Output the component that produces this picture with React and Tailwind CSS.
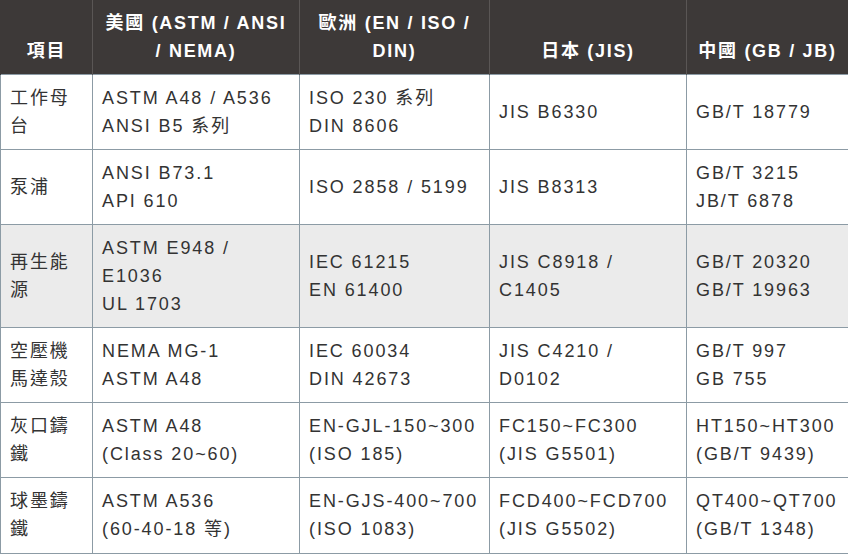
const HEAD = [
  ['項目'],
  ['美國 (ASTM / ANSI', '/ NEMA)'],
  ['歐洲 (EN / ISO /', 'DIN)'],
  ['日本 (JIS)'],
  ['中國 (GB / JB)'],
];

const ROWS = [
  { h: 'h-[75px]', cells: [['工作母', '台'], ['ASTM A48 / A536', 'ANSI B5 系列'], ['ISO 230 系列', 'DIN 8606'], ['JIS B6330'], ['GB/T 18779']] },
  { h: 'h-[75px]', cells: [['泵浦'], ['ANSI B73.1', 'API 610'], ['ISO 2858 / 5199'], ['JIS B8313'], ['GB/T 3215', 'JB/T 6878']] },
  { h: 'h-[103px]', shade: true, cells: [['再生能', '源'], ['ASTM E948 /', 'E1036', 'UL 1703'], ['IEC 61215', 'EN 61400'], ['JIS C8918 /', 'C1405'], ['GB/T 20320', 'GB/T 19963']] },
  { h: 'h-[75px]', cells: [['空壓機', '馬達殼'], ['NEMA MG-1', 'ASTM A48'], ['IEC 60034', 'DIN 42673'], ['JIS C4210 /', 'D0102'], ['GB/T 997', 'GB 755']] },
  { h: 'h-[75px]', cells: [['灰口鑄', '鐵'], ['ASTM A48', '(Class 20~60)'], ['EN-GJL-150~300', '(ISO 185)'], ['FC150~FC300', '(JIS G5501)'], ['HT150~HT300', '(GB/T 9439)']] },
  { h: 'h-[76px]', cells: [['球墨鑄', '鐵'], ['ASTM A536', '(60-40-18 等)'], ['EN-GJS-400~700', '(ISO 1083)'], ['FCD400~FCD700', '(JIS G5502)'], ['QT400~QT700', '(GB/T 1348)']] },
];

const WIDTHS = ['w-[92px]', 'w-[207px]', 'w-[190px]', 'w-[197px]', 'w-[162px]'];

function Lines({ lines }) {
  return lines.map((l, i) => (
    <span key={i} className="block whitespace-nowrap">{l}</span>
  ));
}

export default function App() {
  return (
    <div className="h-[554px] w-[848px] overflow-hidden bg-white font-['Liberation_Sans','Noto_Sans_CJK_TC',sans-serif] text-[18px] leading-[28px] tracking-[1.9px] text-[#333]">
      <table className="w-[848px] table-fixed border-collapse">
        <colgroup>
          {WIDTHS.map((w, i) => <col key={i} className={w} />)}
        </colgroup>
        <thead>
          <tr className="h-[74px] bg-[#3d3938]">
            {HEAD.map((h, i) => (
              <th key={i} className="border-x border-[#5a5655] px-[6px] pb-[9px] text-center align-bottom text-[18px] font-bold tracking-[1.7px] text-white first:border-l-[#3d3938]">
                <Lines lines={h} />
              </th>
            ))}
          </tr>
        </thead>
        <tbody>
          {ROWS.map((r, ri) => (
            <tr key={ri} className={`${r.h} ${r.shade ? 'bg-[#ebebeb]' : 'bg-white'}`}>
              {r.cells.map((c, ci) => (
                <td key={ci} className="border border-[#8c9ba5] px-[9px] text-left align-middle">
                  <Lines lines={c} />
                </td>
              ))}
            </tr>
          ))}
        </tbody>
      </table>
    </div>
  );
}
